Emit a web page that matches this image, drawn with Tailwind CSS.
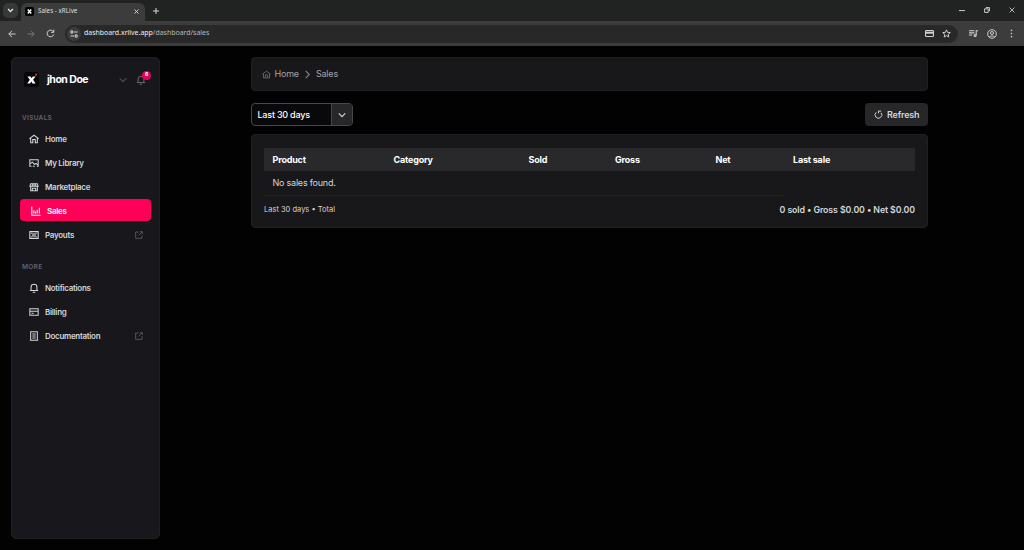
<!DOCTYPE html>
<html lang="en">
<head>
    <meta charset="UTF-8">
    <meta name="viewport" content="width=device-width, initial-scale=1.0">
    <title>Sales - xRLive</title>
    <script src="https://cdn.jsdelivr.net/npm/@tailwindcss/browser@4"></script>
</head>
<body class="h-screen overflow-hidden bg-[#020202] font-['Inter',sans-serif] text-[#d4d4d8]">
<div class="flex h-screen flex-col">
    <!-- Browser tabs -->
    <div class="flex h-[21px] shrink-0 items-start bg-[#202322] text-[#dedede]">
        <div class="mt-[3px] ml-[3px] flex h-[15px] w-[15px] items-center justify-center rounded-[5px] bg-[#363938]">
            <svg class="h-[7px] w-[7px]" fill="none" stroke="currentColor" stroke-width="2" viewBox="0 0 10 10"><path d="M1.5 3L5 6.5 8.500 3" /></svg>
        </div>
        <div class="mt-[3px] ml-[3px] flex h-[18px] w-[124px] items-center rounded-t-[6px] bg-[#3c3c3c] pb-[2px]">
            <div class="ml-[4px] flex h-[9px] w-[9px] items-center justify-center rounded-[2px] bg-black">
                <svg class="h-[5px] w-[5px]" stroke="#fff" stroke-width="3" viewBox="0 0 10 10"><path d="M1.500 1l7 8M8.500 1l-7 8" /></svg>
            </div>
            <span class="mt-[1px] ml-[4px] font-['Noto_Sans',sans-serif] text-[6.3px] leading-none">Sales - xRLive</span>
            <svg class="mr-[6px] ml-auto h-[5px] w-[5px]" stroke="currentColor" stroke-width="1.800" viewBox="0 0 10 10"><path d="M1 1l8 8M9 1l-8 8" /></svg>
        </div>
        <svg class="mt-[8px] ml-[8px] h-[6px] w-[6px]" stroke="currentColor" stroke-width="1.600" viewBox="0 0 10 10"><path d="M5 0v10M0 5h10" /></svg>
        <div class="mt-[7px] mr-[9px] ml-auto flex items-center gap-[19px]">
            <svg class="h-[6px] w-[6px]" stroke="currentColor" stroke-width="1.500" viewBox="0 0 10 10"><path d="M0 6h10" /></svg>
            <svg class="h-[6px] w-[6px]" fill="none" stroke="currentColor" stroke-width="1.500" viewBox="0 0 10 10"><path d="M1 3h6v6H1zM3 1h6v6" /></svg>
            <svg class="h-[6px] w-[6px]" stroke="currentColor" stroke-width="1.300" viewBox="0 0 10 10"><path d="M1 1l8 8M9 1l-8 8" /></svg>
        </div>
    </div>

    <!-- Browser toolbar -->
    <div class="flex h-[25px] shrink-0 items-center bg-[#3c3c3c] pr-[8px] pl-[8px] text-[#d0d0d0]">
        <svg class="h-[8px] w-[8px]" fill="none" stroke="currentColor" stroke-width="1.200" viewBox="0 0 10 10"><path d="M9.500 5H1M5 1L1 5l4 4" /></svg>
        <svg class="ml-[11px] h-[8px] w-[8px] text-[#7c7c7c]" fill="none" stroke="currentColor" stroke-width="1.200" viewBox="0 0 10 10"><path d="M.5 5H9M5 1l4 4-4 4" /></svg>
        <svg class="ml-[11px] h-[9px] w-[9px]" fill="none" stroke="currentColor" stroke-width="1.100" viewBox="0 0 10 10"><path d="M8.500 6.200A3.700 3.700 0 1 1 8.300 3.300M8.600.8v3H5.800" /></svg>
        <div class="ml-[10px] flex h-[18px] flex-1 items-center rounded-full bg-[#282828] pr-[7px] pl-[2px]">
            <div class="flex h-[14px] w-[14px] items-center justify-center rounded-full bg-[#3c3c3c]">
                <svg class="h-[8px] w-[8px]" fill="none" stroke="currentColor" stroke-width="1.300" viewBox="0 0 10 10"><circle cx="2.300" cy="2.500" r="1.400" /><path d="M5 2.500h4.500M.5 7.500H5" /><circle cx="7.700" cy="7.500" r="1.400" /></svg>
            </div>
            <span class="ml-[3px] font-['Noto_Sans',sans-serif] text-[6.950px] leading-none text-[#b8b8b8]"><span class="text-[#f0f0f0]">dashboard.xrlive.app</span>/dashboard/sales</span>
            <svg class="mr-[8px] ml-auto h-[9px] w-[9px]" fill="none" stroke="currentColor" stroke-width="1.200" viewBox="0 0 10 10"><rect x=".6" y="1.800" width="8.800" height="6.600" rx=".8" /><path d="M.6 4.200h8.800" stroke-width="2" /></svg>
            <svg class="h-[9px] w-[9px]" fill="none" stroke="currentColor" stroke-width="1.100" viewBox="0 0 10 10"><path d="M5 1l1.200 2.700 3 .3-2.300 2 .7 2.900L5 7.400 2.400 8.900l.7-2.900L.8 4l3-.3z" /></svg>
        </div>
        <svg class="ml-[11px] h-[9px] w-[9px]" fill="none" stroke="currentColor" stroke-width="1.200" viewBox="0 0 10 10"><path d="M0 2h6M0 4.300h6M0 6.600h3.500M8 7V2h2" /><circle cx="6.800" cy="7.200" r="1.100" /></svg>
        <svg class="ml-[9px] h-[10px] w-[10px]" fill="none" stroke="currentColor" stroke-width="1" viewBox="0 0 10 10"><circle cx="5" cy="5" r="4.300" /><circle cx="5" cy="4" r="1.500" /><path d="M2.200 8C3 6.700 7 6.700 7.800 8" /></svg>
        <svg class="ml-[10px] h-[9px] w-[9px]" fill="currentColor" viewBox="0 0 10 10"><circle cx="5" cy="1.500" r=".9" /><circle cx="5" cy="5" r=".9" /><circle cx="5" cy="8.500" r=".9" /></svg>
    </div>

    <div class="flex min-h-0 flex-1 pt-[11px] pb-[11px] pl-[11px]">
        <!-- Sidebar -->
        <aside class="w-[149px] shrink-0 rounded-[5px] border border-[#202024] bg-[#18181c] px-[8px]">
            <div class="flex h-[43px] items-center pl-[4px]">
                <svg class="h-[15px] w-[15px]" viewBox="0 0 15 15"><rect width="15" height="15" rx="2.500" fill="#050505" /><path d="M3.400 4.500h3.100l1.100 1.700 1.200-1.700h2.800L9.100 7.700l2.500 3.700H8.500L7.300 9.500l-1.200 1.900H3.300l2.500-3.700z" fill="#fff" /><circle cx="12" cy="2.700" r="1.100" fill="#e5323b" /></svg>
                <span class="ml-[8px] text-[10.500px] font-bold tracking-[-0.500px] text-white">jhon Doe</span>
                <svg class="ml-auto h-[8px] w-[8px] text-[#71717a]" fill="none" stroke="currentColor" stroke-width="1.200" viewBox="0 0 10 10"><path d="M1 3l4 4 4-4" /></svg>
                <div class="relative mr-[5px] ml-[9px]">
                    <svg class="h-[10px] w-[10px] text-[#777780]" fill="none" stroke="currentColor" stroke-width="2" viewBox="0 0 24 24"><path d="M5 17V10a7 7 0 0 1 14 0v7M2 18h20M9 22h6" /></svg>
                    <span class="absolute -top-[4px] -right-[5px] flex h-[9px] w-[9px] items-center justify-center rounded-full bg-[#e6005a] text-[5px] font-bold text-white">6</span>
                </div>
            </div>

            <h3 class="mt-[12px] ml-[2px] text-[6.500px] leading-[10px] font-semibold tracking-[0.3px] text-[#63636c]">VISUALS</h3>
            <nav class="mt-[4px] flex flex-col gap-[2px] text-[8px] font-semibold tracking-[-0.280px]">
                <a href="#" class="flex h-[22px] items-center pt-[1px] pl-[9px]">
                    <svg class="h-[10px] w-[10px]" fill="none" stroke="currentColor" stroke-width="2.500" viewBox="0 0 24 24"><path d="M1 11L12 3l11 8M4 9v12h5v-8h6v8h5V9" /></svg>
                    <span class="ml-[6px]">Home</span>
                </a>
                <a href="#" class="flex h-[22px] items-center pt-[1px] pl-[9px]">
                    <svg class="h-[10px] w-[10px]" fill="none" stroke="currentColor" stroke-width="2.500" viewBox="0 0 24 24"><path d="M6 20H2V4h20v16h-3M2 14l6-4 5 5 4-2 5 5M9 20h5" /></svg>
                    <span class="ml-[6px]">My Library</span>
                </a>
                <a href="#" class="flex h-[22px] items-center pt-[1px] pl-[9px]">
                    <svg class="h-[10px] w-[10px]" fill="none" stroke="currentColor" stroke-width="2.500" viewBox="0 0 24 24"><path d="M4 4h16l2 6H2zM4 11v10h16V11M8 21v-6h8v6M8 4v6M12 4v6M16 4v6" /></svg>
                    <span class="ml-[6px]">Marketplace</span>
                </a>
                <a href="#" class="flex h-[22px] items-center rounded-[4px] bg-[#ff0059] pt-[1px] pl-[11px] text-white">
                    <svg class="h-[10px] w-[10px]" fill="none" stroke="currentColor" stroke-width="2.500" viewBox="0 0 24 24"><path d="M2 1v21h21M7 10v8M11 13v5M15 9v9M20 4v14" /></svg>
                    <span class="ml-[6px]">Sales</span>
                </a>
                <a href="#" class="flex h-[22px] items-center pt-[1px] pr-[8px] pl-[9px]">
                    <svg class="h-[10px] w-[10px]" fill="none" stroke="currentColor" stroke-width="2.700" viewBox="0 0 24 24"><path d="M2 4h20v16H2zM6 9l2-2M18 9l-2-2M6 15l2 2M18 15l-2 2" /><circle cx="12" cy="12" r="3" /></svg>
                    <span class="ml-[6px]">Payouts</span>
                    <svg class="ml-auto h-[8px] w-[8px] text-[#5c5c63]" fill="none" stroke="currentColor" stroke-width="2.600" viewBox="0 0 24 24"><path d="M11 3H2v19h19v-9M15 2h7v7M22 2L11 13" /></svg>
                </a>
            </nav>

            <h3 class="mt-[17px] ml-[2px] text-[6.500px] leading-[10px] font-semibold tracking-[0.3px] text-[#63636c]">MORE</h3>
            <nav class="mt-[4px] flex flex-col gap-[2px] text-[8px] font-semibold tracking-[-0.300px]">
                <a href="#" class="flex h-[22px] items-center pt-[1px] pl-[9px]">
                    <svg class="h-[10px] w-[10px]" fill="none" stroke="currentColor" stroke-width="2.500" viewBox="0 0 24 24"><path d="M5 18V10a7 7 0 0 1 14 0v8M2 18h20M9 22h6" /></svg>
                    <span class="ml-[6px]">Notifications</span>
                </a>
                <a href="#" class="flex h-[22px] items-center pt-[1px] pl-[9px]">
                    <svg class="h-[10px] w-[10px]" fill="none" stroke="currentColor" stroke-width="2.500" viewBox="0 0 24 24"><path d="M2 4h20v16H2zM2 10h20M6 15h5" /></svg>
                    <span class="ml-[6px]">Billing</span>
                </a>
                <a href="#" class="flex h-[22px] items-center pt-[1px] pr-[8px] pl-[9px]">
                    <svg class="h-[10px] w-[10px]" fill="none" stroke="currentColor" stroke-width="2.500" viewBox="0 0 24 24"><path d="M4 2h16v20H4zM2 22h20M8 7h8M8 12h8M8 17h8" /></svg>
                    <span class="ml-[6px]">Documentation</span>
                    <svg class="ml-auto h-[8px] w-[8px] text-[#5c5c63]" fill="none" stroke="currentColor" stroke-width="2.600" viewBox="0 0 24 24"><path d="M11 3H2v19h19v-9M15 2h7v7M22 2L11 13" /></svg>
                </a>
            </nav>
        </aside>

        <!-- Main content -->
        <main class="ml-[91px] w-[677px]">
            <div class="flex h-[34px] items-center rounded-[4px] border border-[#202023] bg-[#18181b] pl-[10px] text-[9px] tracking-[-0.200px] text-[#a1a1aa]">
                <svg class="h-[9px] w-[9px] text-[#77777f]" fill="none" stroke="currentColor" stroke-width="2" viewBox="0 0 24 24"><path d="M1 11L12 3l11 8M4 10v11h16V10M9 20v-7h6v7" /></svg>
                <span class="ml-[3.500px]">Home</span>
                <svg class="ml-[4px] h-[9px] w-[9px] text-[#85858e]" fill="none" stroke="currentColor" stroke-width="1.200" viewBox="0 0 10 10"><path d="M3 1l4 4-4 4" /></svg>
                <span class="ml-[4px]">Sales</span>
            </div>

            <div class="mt-[12px] flex h-[23px] justify-between">
                <button class="flex w-[102px] overflow-hidden rounded-[4px] border border-[#46464d] bg-[#09090b] text-[9px] tracking-[-0.220px] text-white">
                    <span class="flex h-full flex-1 items-center pl-[5.500px] font-medium">Last 30 days</span>
                    <span class="flex h-full w-[21px] items-center justify-center border-l border-[#46464d] bg-[#27272a]">
                        <svg class="h-[8px] w-[8px]" fill="none" stroke="#d4d4d8" stroke-width="1.400" viewBox="0 0 10 10"><path d="M1 3l4 4 4-4" /></svg>
                    </span>
                </button>
                <button class="flex w-[63px] items-center rounded-[4px] bg-[#27272a] pl-[9px] text-[9px] font-semibold tracking-[-0.200px]">
                    <svg class="h-[9px] w-[9px]" fill="none" stroke="currentColor" stroke-width="2.500" viewBox="0 0 24 24"><path d="M6 6a9 9 0 1 0 13 1.500M12 9V2M12 3h7" /></svg>
                    <span class="ml-[4px]">Refresh</span>
                </button>
            </div>

            <div class="mt-[8px] h-[94px] rounded-[4px] border border-[#202024] bg-[#18181b] px-[12px] pt-[13px]">
                <table class="w-full table-fixed text-left text-[9px]">
                    <thead>
                        <tr class="h-[23px] bg-[#29292b] tracking-[-0.200px] text-white">
                            <th class="w-[121px] pl-[8.500px] font-bold">Product</th>
                            <th class="w-[135px] pl-[8.500px] font-bold">Category</th>
                            <th class="w-[86px] pl-[8.500px] font-bold">Sold</th>
                            <th class="w-[101px] pl-[9px] font-bold">Gross</th>
                            <th class="w-[77px] pl-[8.500px] font-bold">Net</th>
                            <th class="pl-[9px] font-bold">Last sale</th>
                        </tr>
                    </thead>
                    <tbody>
                        <tr class="h-[24px]">
                            <td colspan="5" class="border-b border-[#242427] pl-[8.500px] tracking-[-0.220px]">No sales found.</td>
                        </tr>
                    </tbody>
                </table>
                <div class="mt-[7px] flex items-center justify-between leading-[14px]">
                    <span class="text-[7.500px]">Last 30 days • Total</span>
                    <span class="text-[8.800px] font-semibold tracking-[-0.110px]">0 sold • Gross $0.00 • Net $0.00</span>
                </div>
            </div>
        </main>
    </div>
</div>
</body>
</html>
